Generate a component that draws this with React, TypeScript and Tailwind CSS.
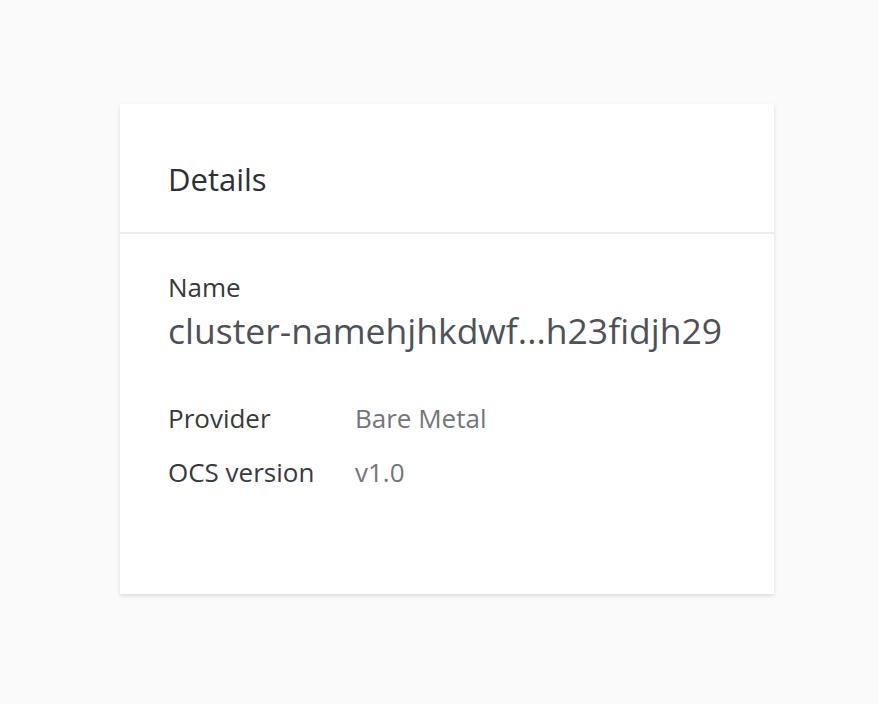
import React from "react";

export default function App() {
  return (
    <div
      className="min-h-[704px] w-full bg-[#fafafa] pt-[104px] pl-[120px]"
      style={{ fontFamily: '"Open Sans", "Noto Sans", sans-serif' }}
    >
      <div className="flex h-[490px] w-[654px] flex-col bg-white shadow-[0_2px_4px_rgba(0,0,0,0.12)]">
        <div className="h-[130px] border-b-2 border-[#ededed] px-[48px] pt-[60px]">
          <h2 className="text-[31px] leading-none text-[#2d3035]">Details</h2>
        </div>
        <div className="px-[48px] pt-[38px]">
          <div className="text-[26px] leading-[30px] text-[#363a3f]">Name</div>
          <div className="mt-[7px] text-[35.5px] leading-[42px] text-[#4d5258]">
            cluster-namehjhkdwf...h23fidjh29
          </div>
          <div className="mt-[52px] grid grid-cols-[187px_1fr] gap-y-[24px] text-[26px] leading-[30px]">
            <div className="text-[#363a3f]">Provider</div>
            <div className="text-[#72767b]">Bare Metal</div>
            <div className="text-[#363a3f]">OCS version</div>
            <div className="text-[#72767b]">v1.0</div>
          </div>
        </div>
      </div>
    </div>
  );
}
